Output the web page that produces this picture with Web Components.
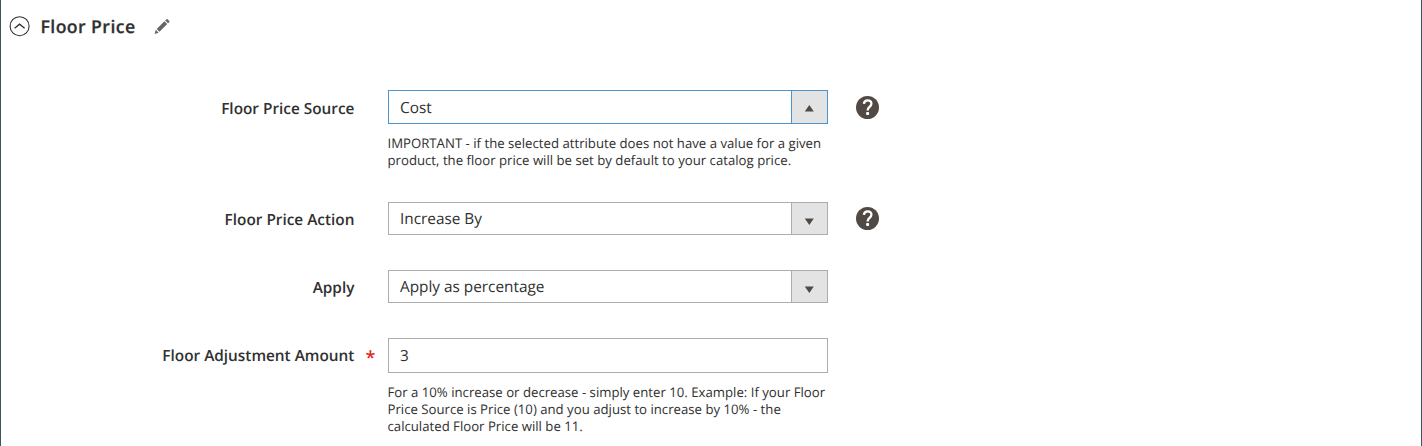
<!DOCTYPE html>
<html lang="en">
<head>
<meta charset="utf-8">
<title>Floor Price</title>
<style>
html,body{margin:0;height:100%;background:#fff;overflow:hidden}
body{font-family:"Open Sans","Noto Sans",sans-serif;color:#303030;text-rendering:geometricPrecision}
</style>
</head>
<body>
<price-section heading="Floor Price">
  <form-row label="Floor Price Source" help style="height:112px;--h:34px;--label-h:38px;--help-top:6px">
    <select-box active>Cost</select-box>
    <field-note slot="note"><div>IMPORTANT - if the selected attribute does not have a value for a given</div><div>product, the floor price will be set by default to your catalog price.</div></field-note>
  </form-row>
  <form-row label="Floor Price Action" help style="height:68px;--h:33px"><select-box>Increase By</select-box></form-row>
  <form-row label="Apply" style="height:68px;--h:33px"><select-box>Apply as percentage</select-box></form-row>
  <form-row label="Floor Adjustment Amount" required style="height:108px;--h:35px;--label-h:36px">
    <text-box>3</text-box>
    <field-note slot="note"><div>For a 10% increase or decrease - simply enter 10. Example: If your Floor</div><div>Price Source is Price (10) and you adjust to increase by 10% - the</div><div>calculated Floor Price will be 11.</div></field-note>
  </form-row>
</price-section>
<script>
const define=(name,render)=>customElements.define(name,class extends HTMLElement{
  connectedCallback(){ if(!this.shadowRoot) this.attachShadow({mode:'open'}).innerHTML=render(this); }
});
define('price-section',el=>`
<style>
:host{display:block;box-sizing:border-box;height:446px;overflow:hidden;border:solid #41535d;border-width:0 1px;background:#fff}
header{display:flex;align-items:center;height:54px;box-sizing:border-box;padding-left:8px}
h2{margin:0 0 0 10.5px;font-size:17.7px;line-height:24px;font-weight:600;letter-spacing:.4px;white-space:nowrap;-webkit-text-stroke:.25px #303030}
svg{display:block;flex:none}
svg:first-child{margin-bottom:1px}
.pencil{margin:0 0 2px 18.5px}
main{padding-top:36px}
</style>
<header>
<svg width="21" height="21" viewBox="0 0 21 21" fill="none" stroke="#303030"><circle cx="10.6" cy="10.2" r="9.5" stroke-width="1.1"/><path d="M5.6 12.2 10.6 8.2l5 4" stroke-width="1.3"/></svg>
<h2>${el.getAttribute('heading')}</h2>
<svg class="pencil" width="17" height="17" viewBox="0 0 17 17" fill="#666"><path d="m.6 15.9 1.2-4.1 2.9 2.9zM2.7 11l7.7-7.7 2.8 2.8-7.7 7.7zM11.2 2.5l1.3-1.3q.5-.5 1 0l1.8 1.8q.5.5 0 1l-1.3 1.3z"/></svg>
</header>
<main><slot></slot></main>`);
define('form-row',el=>`
<style>
:host{display:grid;grid-template-columns:353.4px 473.6px 86px;align-items:start}
.label{display:flex;height:var(--label-h,35px);align-items:center;justify-content:flex-end;position:relative;font-size:15.35px;font-weight:600;line-height:20px;white-space:nowrap}
.star{position:absolute;left:364.4px;top:8px;color:#e22626;font-size:18px;line-height:24px;font-weight:600}
.control{margin-left:33.6px;width:440px}
.box{height:var(--h)}
.help{margin:var(--help-top,5px) 0 0 28px}
</style>
<div class="label">${el.getAttribute('label')}${el.hasAttribute('required')?'<span class="star">*</span>':''}</div>
<div class="control"><div class="box"><slot></slot></div><slot name="note"></slot></div>
${el.hasAttribute('help')?'<help-icon class="help"></help-icon>':''}`);
define('help-icon',()=>`
<style>:host{display:block;width:24px;height:24px}svg{display:block}</style>
<svg width="24" height="24" viewBox="0 0 24 24"><circle cx="11.5" cy="11.5" r="11.5" fill="#514943"/><path d="M7.9 7.9C8.1 5.5 9.5 4.3 11.6 4.3c2.3 0 3.8 1.3 3.8 3.4 0 3.2-3.8 3.3-3.8 6.7" fill="none" stroke="#fff" stroke-width="2.3"/><rect x="10.1" y="16.1" width="3" height="3" rx=".8" fill="#fff"/></svg>`);
define('select-box',el=>{const a=el.hasAttribute('active');return `
<style>
:host{display:flex;box-sizing:border-box;height:100%;border:1px solid ${a?'#4d94cd':'#adadad'};background:#fff;font-size:15.35px;line-height:20px}
.value{flex:1;padding-left:11px;height:20px;margin-top:${a?7:6}px;white-space:nowrap}
.arrow{width:35px;border-left:1px solid ${a?'#4d94cd':'#adadad'};background:#e3e3e3}
svg{display:block}
</style>
<span class="value"><slot></slot></span>
<span class="arrow"><svg width="35" height="31" viewBox="0 0 35 31"><path d="${a?'M12.8 20.5h9l-4.5-6.5z':'M12.8 15.5h9L17.3 22z'}" fill="#514943"/></svg></span>`});
define('text-box',()=>`
<style>:host{display:block;box-sizing:border-box;height:100%;border:1px solid #adadad;padding:7px 0 0 11px;font-size:15.35px;line-height:20px}</style><slot></slot>`);
define('field-note',()=>`
<style>:host{display:block;margin:11px 0 0 -.5px;font-size:13.2px;line-height:17px;white-space:nowrap}</style><slot></slot>`);
</script>
</body>
</html>
